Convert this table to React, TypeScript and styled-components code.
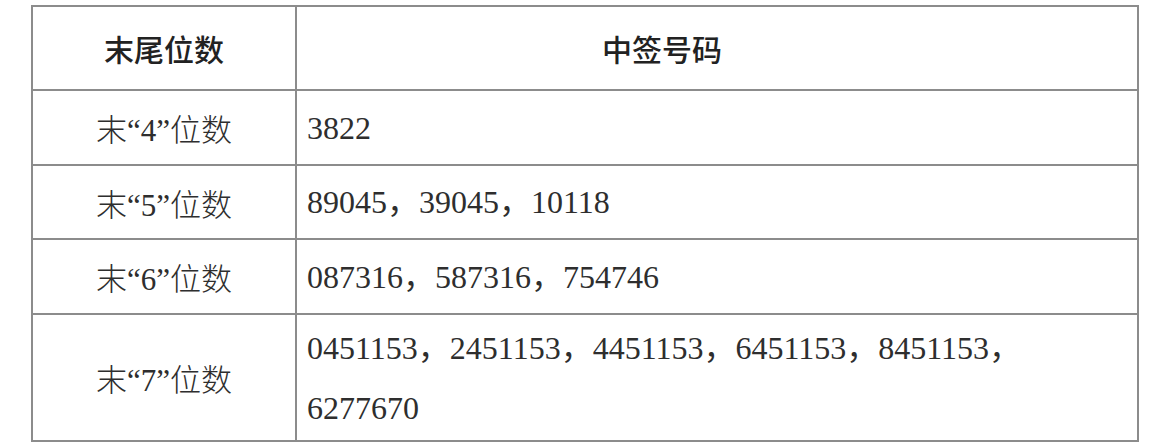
import styled, { createGlobalStyle } from "styled-components";

const GlobalStyle = createGlobalStyle`
  html, body {
    margin: 0;
    padding: 0;
    background: #ffffff;
  }
`;

const Page = styled.div`
  padding: 5px 0 0 31px;
`;

const Table = styled.table`
  width: 1108px;
  border-collapse: collapse;
  table-layout: fixed;
  font-family: "Liberation Serif", "Noto Sans CJK SC", serif;
  color: #2e2e2e;
`;

const Row = styled.tr<{ $h: number }>`
  height: ${(p) => p.$h}px;
`;

const HeadCell = styled.th<{ $shift?: number }>`
  border: 2px solid #8c8c8c;
  font-family: "Noto Sans CJK SC", sans-serif;
  font-size: 30px;
  font-weight: 500;
  color: #222222;
  text-align: center;
  vertical-align: middle;
  padding: 0 ${(p) => p.$shift ?? 0}px 0 0;
`;

const LabelCell = styled.td`
  border: 2px solid #8c8c8c;
  font-size: 31px;
  font-weight: 300;
  text-align: center;
  vertical-align: middle;
  padding: 0;
`;

const NumberCell = styled.td`
  border: 2px solid #8c8c8c;
  font-size: 32px;
  line-height: 60px;
  text-align: left;
  vertical-align: middle;
  padding: 0 0 0 10px;
`;

const rows = [
  { digits: "4", codes: "3822", h: 75 },
  { digits: "5", codes: "89045，39045，10118", h: 74 },
  { digits: "6", codes: "087316，587316，754746", h: 75 },
  {
    digits: "7",
    codes: "0451153，2451153，4451153，6451153，8451153，\n6277670",
    h: 127,
  },
];

export default function App() {
  return (
    <Page>
      <GlobalStyle />
      <Table>
        <colgroup>
          <col style={{ width: 264 }} />
          <col />
        </colgroup>
        <thead>
          <Row $h={84}>
            <HeadCell>末尾位数</HeadCell>
            <HeadCell $shift={110}>中签号码</HeadCell>
          </Row>
        </thead>
        <tbody>
          {rows.map((r) => (
            <Row $h={r.h} key={r.digits}>
              <LabelCell>末“{r.digits}”位数</LabelCell>
              <NumberCell>
                {r.codes.split("\n").map((line, i) => (
                  <div key={i}>{line}</div>
                ))}
              </NumberCell>
            </Row>
          ))}
        </tbody>
      </Table>
    </Page>
  );
}
